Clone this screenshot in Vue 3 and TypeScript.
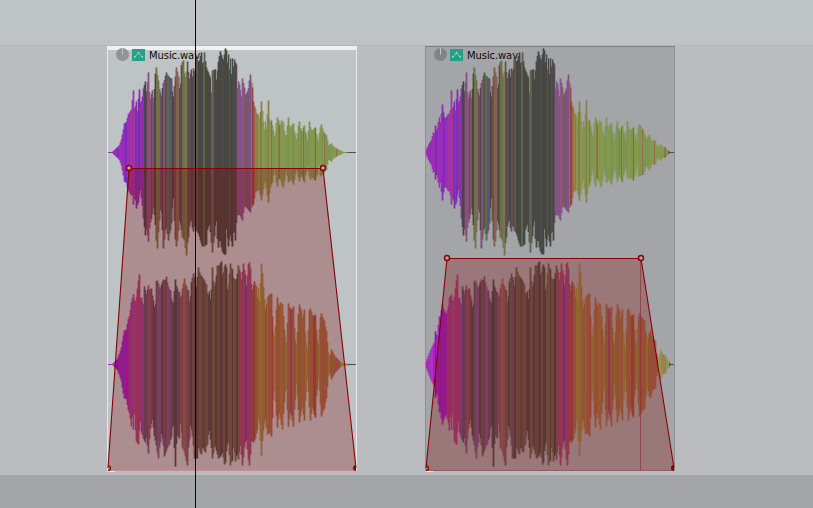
<script setup lang="ts">
interface Column { x: number; up: number; down: number; haloUp: number; haloDown: number; color: string }
interface Wave { center: number; columns: Column[] }
interface Clip { name: string; kind: 'selected' | 'dimmed'; waves: Wave[]; envelope: number }

// Samples are "position:amplitude"; positions are at three units to the pixel, amplitudes in pixels.
function read(text: string, shift: number): [number, number][] {
  return text.trim().split(/\s+/).map((s) => {
    const [x, h] = s.split(':').map(Number)
    return [x / 3 + shift, h] as [number, number]
  })
}

const softStart = '24:.5 38:.5 45:3 52:5 58:7 64:12 70:22 73:29 79:30 85:38 91:41 95:43'
const softStartLow2 = '24:.5 38:.5 45:3 52:5 58:10 64:16 70:28 73:34 79:34 85:45 90:50 94:62'
const hardTop = '24:2 33:8 40:12 46:20 49:18 52:27 55:22 58:24 64:35 68:30 73:48 76:40 79:35 85:35 92:39 97:38'
const hardLow = '24:2 33:10 40:16 46:20 49:20 52:33 58:28 64:48 68:48 73:60 79:53 85:50 92:58 94:66'

const bodies = {
  top1: ['100:62 104:42 109:51 112:40 118:63 122:48 127:55 131:64 136:71 140:60 145:80 150:52 157:62 162:52 165:75 169:85 175:72 180:60 184:56 189:68 193:72 199:80 206:76 213:74 220:54 225:72 230:85 236:75 240:58 244:87 249:92 254:78 258:75 262:91 268:73 274:83 278:75 281:84 285:80 290:94 297:90 304:100 309:85 313:100 319:85 325:80 331:75 334:57 338:82 345:83 350:72 354:88 361:101 368:94 372:92',
    '0:104 4:102 8:88 11:98 14:80 16:94 20:76 22:94 26:85 29:93 33:88 37:63 40:71 44:68 50:55 53:74 58:65 62:57 66:60 70:63 74:72 77:78 81:65 83:48 86:51 90:44 96:38 100:38 105:34 109:51 113:40 118:22 121:31 125:25 130:52 134:31 140:32 145:22 150:14 156:35 160:32 165:26 170:32 175:30 180:18 184:16 190:35 195:24 204:29 210:18 215:13 222:31 228:22 233:22 237:27 243:18 248:12 253:31 258:23 264:22 270:25 276:16 281:12 285:24 289:28'],
  low1: ['98:43 101:52 105:43 109:56 115:50 121:37 127:52 131:66 136:83 140:76 145:89 150:70 155:66 161:55 166:70 171:96 175:80 183:52 187:75 191:96 196:78 200:75 205:88 210:78 215:70 220:42 225:80 228:94 233:88 238:68 243:74 248:85 254:88 259:103 264:85 270:70 274:67 279:79 285:72 290:78 297:82 303:90 308:94 313:94 318:92 323:76 329:72 333:84 337:100 343:84 349:66 354:95 360:86 366:98 372:102',
    '0:102 4:75 10:94 16:82 22:94 27:75 31:88 36:63 42:62 46:63 52:68 58:55 62:54 67:56 72:58 76:60 81:53 86:52 91:40 97:38 103:38 110:48 115:37 121:27 130:50 136:35 142:30 149:16 156:34 162:25 168:28 174:35 179:28 184:17 191:30 198:26 206:32 211:22 215:16 223:29 230:22 238:30 243:20 248:14 255:27 263:25 270:28 277:22 283:12 287:24'],
  top2: ['100:70 105:62 109:66 114:80 118:90 121:66 125:67 130:58 134:78 140:70 145:79 150:74 154:76 160:64 166:53 168:83 173:84 180:76 184:79 190:85 196:84 200:88 204:78 210:74 216:63 221:62 226:85 231:76 237:72 243:66 248:76 253:86 258:78 264:74 270:60 274:82 281:91 285:85 290:78 295:97 301:90 308:87 313:84 319:80 324:68 328:73 333:62 337:97 342:78 347:82 353:99 358:99 364:103 368:88 373:97',
    '0:100 4:97 8:72 12:85 16:101 21:95 26:86 32:85 36:86 40:99 46:92 50:84 55:101 61:90 65:78 70:100 73:102 77:95 81:72 88:83 94:78 97:65 100:76 104:62 109:101 113:90 118:65 122:55 127:66 133:70 139:71 143:45 145:32 150:28 153:48 157:67 162:58 167:62 173:60 180:28 185:22 190:61 195:56 200:55 206:58 210:24 216:20 219:45 223:60 229:54 233:46 238:55 243:22 248:16 253:54 257:56 264:48 272:50 276:25 281:20 285:45 289:51'],
  low2: ['97:50 100:65 104:48 108:76 115:80 121:56 125:68 131:74 136:78 140:73 145:89 151:64 158:55 163:71 169:80 175:94 180:78 184:69 189:76 194:92 199:86 207:80 214:73 220:58 226:102 231:70 238:74 242:58 248:83 254:88 262:101 267:75 272:60 278:72 284:94 292:94 296:82 303:90 309:82 315:88 321:80 328:65 334:82 338:94 345:80 350:86 355:94 362:92 368:88 374:100',
    '0:98 5:85 10:76 16:101 21:96 26:82 32:97 36:88 41:95 46:80 53:101 60:78 65:76 70:94 74:101 80:75 86:78 91:74 97:65 102:50 109:91 115:66 121:54 127:70 133:68 140:72 145:35 149:25 157:63 163:48 172:65 178:38 184:22 190:62 197:47 206:62 210:35 215:18 223:58 232:42 238:56 243:28 248:14 256:56 263:42 270:53 276:25 281:14 289:52'],
}

const softTail1 = '295:21 304:17 311:7 319:9 325:6 335:4 345:2 355:.5 392:.5'
const softTail2 = '297:44 305:33 310:12 315:8 320:15 328:9 336:6 345:3 355:1 392:.5'
const hardTail1 = '302:22 307:16 311:13 319:18 326:12 336:12 344:5 352:8 358:6 366:5 374:2 380:.5 392:.5'
const hardTail2 = '303:44 309:30 314:22 321:34 328:26 336:24 341:10 347:6 352:15 359:10 366:9 374:4 382:.5 392:.5'

// Amplitude per pixel column; a peak that falls inside a column sets its height.
function heights(start: string, body: string[], tail: string): number[] {
  const pts = [...read(start, -8), ...read(body[0], -8), ...read(body[1], 117), ...read(tail, 117)]
  return Array.from({ length: 248 }, (_, x) => {
    const c = x + 0.5
    let i = 0
    while (i < pts.length - 2 && pts[i + 1][0] < c) i++
    const [x0, h0] = pts[i]
    const [x1, h1] = pts[i + 1]
    const t = x1 > x0 ? Math.min(1, Math.max(0, (c - x0) / (x1 - x0))) : 0
    let h = h0 + (h1 - h0) * t
    for (const [px, ph] of pts) if (px >= x && px < x + 1 && ph > h) h = ph
    return Math.max(0.5, h)
  })
}

// "from:color" pairs, in pixels from the clip's left edge.
function palette(text: string): string[] {
  const list = text.trim().split(/\s+/).map((s) => s.split(':'))
  const out: string[] = []
  list.forEach(([x, color], i) => {
    const end = i + 1 < list.length ? Number(list[i + 1][0]) : 248
    for (let p = Number(x); p < end; p++) out.push('#' + color)
  })
  return out
}

const colors1 = palette(`0:a02cb4 3:8a2cc0 5:a02cb4 9:7a2cbe 11:a02cb4 15:902cc0 17:7a2cbe 19:8f35b8 20:a02cb4 22:a23898 24:a02cb4
  25:a23898 27:7d2fae 29:912fb8 30:7a2cbe 32:9830a0 33:8a30b0 36:4a4350 38:5f4a5c 39:8a5078 43:6a4a5e 44:7b5070 46:474743 48:74704c 51:7a684c
  52:6a4a66 54:474743 55:8a4c78 57:505a48 59:5a6a4c 61:63507a 64:474743 66:6e5048 68:806450 71:5a4a5c 74:6e7048 77:747a4e 79:5f5048
  81:5b4a5a 83:4a4846 85:56564a 87:474743 88:6a5048 90:474743 95:5c6447 97:474743 103:62604a 106:474743 114:4e4e48 115:474743 121:565648 122:474743
  125:4c4c58 127:474743 128:5f4c48 129:87604c 130:805487 134:87568b 136:8b5070 137:77604a 139:70529a 141:7a52a0 142:8a4c78 143:87765a 144:8f4848
  146:a06048 147:8f8048 150:84994c 152:8a7a4c 154:84994c 157:7f9450 160:8a7a4c 161:84994c 163:8a724c 164:7f9450 167:84994c 170:8a7a4c
  171:8a6c4c 172:84994c 178:7f9450 181:84994c 184:7a9454 187:84994c 190:7f9450 193:8a7a4c 194:84994c 195:8a6c4c 196:7f9450 202:84994c 205:7f9450
  207:8a644c 208:84994c 213:7f9450 215:84994c 216:8f704c 217:7f9450 223:84994c 228:8f704c 229:84994c 238:8f704c 240:84994c 242:55554c`)

const colors2 = palette(`0:b028b0 3:8f3fb8 5:c028c8 7:9f21c0 9:781cc0 10:9f21c0 14:8f28b8 15:9f21c0 20:9c2da8 21:aa3d73 23:914299 25:9f4590 29:aa425d
  31:b6424d 32:914299 36:5f5263 38:685263 40:6f5c83 42:a5424d 43:685263 45:4d4d4d 47:5f5263 49:795883 53:4d4d4d 55:795063 57:685263 59:795883
  62:685263 65:4d4d4d 69:685263 72:785868 75:9b634d 77:786363 79:795068 81:68604d 82:4d4d4d 84:68604d 86:685263 88:4d4d4d 90:68604d 94:5f5053
  97:68604d 100:4d4d4d 104:68604d 107:4d4d4d 109:68584d 112:4d4d4d 115:68604d 117:4d4d4d 120:6a654d 124:4d4d4d 125:6a604d 128:4d4842 130:6a605d
  131:87505d 132:974d6e 135:875c4d 136:974d6e 137:813ca4 139:974d6e 144:a04d5c 145:974d4d 147:9c6e47 150:978942 154:978042 157:9c6e47
  159:978942 160:9c6e47 164:ac4b42 165:978942 168:9c6e47 172:a5764b 175:9c6e47 177:978942 179:9c6e47 182:974d6e 184:9c6e47 188:978942 189:9c6e47
  194:a5764b 195:9c6e47 197:978942 200:9c6e47 205:974d6e 206:ac4b42 208:9c6e47 210:978942 212:9c6e47 214:a5644b 216:9c6e47 220:978942 222:9c6e47
  225:a0646a 226:9c6e47 228:a85d65 229:9c6e47 232:969850 235:9c8058 239:a07a58 240:909850 243:55554c`)

function wave(center: number, up: number[], down: number[], colors: string[]): Wave {
  const near = (h: number[], x: number) => Math.max(h[x - 1] ?? 0, h[x], h[x + 1] ?? 0)
  return {
    center,
    columns: up.map((h, x) => ({
      x,
      up: Math.round(h * 2) / 2,
      down: Math.round(down[x] * 2) / 2,
      haloUp: near(up, x),
      haloDown: near(down, x),
      color: colors[x],
    })),
  }
}

function waves(soft: boolean): Wave[] {
  const t1 = soft ? softTail1 : hardTail1
  const t2 = soft ? softTail2 : hardTail2
  return [
    wave(106.5, heights(soft ? softStart : hardTop, bodies.top1, t1), heights(soft ? softStart : hardTop, bodies.low1, t1), colors1),
    wave(318.5, heights(soft ? softStartLow2 : hardLow, bodies.top2, t2), heights(soft ? softStartLow2 : hardLow, bodies.low2, t2), colors2),
  ]
}

const clips: Clip[] = [
  { name: 'Music.wav', kind: 'selected', waves: waves(true), envelope: 122 },
  { name: 'Music.wav', kind: 'dimmed', waves: waves(false), envelope: 212 },
]
</script>

<template>
  <main class="arranger">
    <div class="lane upper"></div>
    <section class="track">
      <article v-for="(clip, i) in clips" :key="i" class="clip" :class="clip.kind">
        <svg class="canvas" width="250" height="426" viewBox="-1 0 250 426">
          <g v-for="(w, k) in clip.waves" :key="k">
            <template v-for="c in w.columns" :key="c.x">
              <rect class="halo" :x="c.x" :y="w.center - c.haloUp" width="1" :height="c.haloUp + c.haloDown" :fill="c.color" />
              <rect :x="c.x" :y="w.center - c.up" width="1" :height="c.up + c.down" :fill="c.color" />
            </template>
            <path class="silence" :d="`M${clip.kind === 'selected' ? 240 : 244} ${w.center}H248`" />
          </g>
          <path class="shade" :d="`M0 424V422L21 ${clip.envelope}H215L248 422V424Z`" />
          <path v-if="clip.kind === 'dimmed'" class="guide" :d="`M214.5 ${clip.envelope}V424`" />
          <path class="base" d="M0 424.5H248" />
          <path class="tab" d="M0 425.5H7" />
          <path class="curve" :d="`M0 422L21 ${clip.envelope}.5H215L248 422`" />
          <circle class="node" cx="21" :cy="clip.envelope" r="2.5" />
          <circle class="node" cx="215" :cy="clip.envelope" r="2.5" />
          <path class="half" d="M0 419.5A2.5 2.5 0 0 1 0 424.5" />
          <path class="end" d="M248 419a3 3 0 0 0 0 6Z" />
        </svg>
        <header class="title">
          <svg width="13" height="13" viewBox="0 0 13 13">
            <circle cx="6.5" cy="6.5" r="6.5" class="dial" />
            <path d="M6.5 0V6.5" class="hand" />
          </svg>
          <svg width="13" height="12" viewBox="0 0 13 12">
            <rect width="13" height="12" fill="#289f86" />
            <path d="M2.5 8L6.5 4L10.5 8" fill="none" stroke="#86d3c3" stroke-width="1" />
            <path d="M2 7h1.5v1.5h-1.5zM5.7 3h1.6v1.6h-1.6zM9.5 7h1.5v1.5h-1.5z" fill="#a5e1d5" />
          </svg>
          <span>{{ clip.name }}</span>
        </header>
      </article>
    </section>
    <div class="lane lower"></div>
    <div class="playhead"></div>
  </main>
</template>

<style>
body { margin: 0; overflow: hidden; }
</style>
<style scoped>
.arranger { position: relative; display: grid; grid-template-rows: 46px 429px 33px; width: 813px; height: 508px; overflow: hidden; }
.upper { background: #bec3c6; border-bottom: 1px solid #b3b7ba; box-sizing: border-box; }
.lower { background: #a3a5a8; }
.track { display: flex; align-items: flex-start; gap: 68px; padding-left: 107px; background: #bbbcc0; }
.clip { position: relative; box-sizing: border-box; width: 250px; height: 425px; flex: none; }
.selected { background: #bec3c6; border: 1px solid #e5e7e8; border-top: 4px solid #f0f0f0; }
.dimmed { background: #a3a5a8; border: 1px solid #8b8d8f; border-top-color: #7d7f81; border-bottom: 0; }
.canvas { position: absolute; left: -1px; top: -1px; display: block; }
.selected .canvas { top: -4px; }
.halo { fill-opacity: .4; }
.silence { stroke: #4c4d4c; stroke-width: 1; }
.title { position: absolute; left: 8px; top: 1px; display: flex; align-items: center; gap: 3px; height: 13px; }
.selected .title { top: -2px; }
.title span { margin-left: 1px; font: 10px/13px "DejaVu Sans", Verdana, sans-serif; letter-spacing: -.1px; color: #0b0b0b; position: relative; top: 1px; }
.dial { fill: #929395; }
.dimmed .dial { fill: #828385; }
.hand { stroke: #c2c4c5; stroke-width: 1; }
.shade { fill: #800000; fill-opacity: .27; }
.guide { stroke: #8d3038; stroke-opacity: .65; }
.base { stroke: #c78d90; stroke-width: 1; }
.dimmed .base { stroke: #8e5d61; }
.tab { stroke: #f0eaea; }
.curve { fill: none; stroke: #870004; stroke-width: 1.1; }
.node { fill: #b5a5a6; stroke: #870004; stroke-width: 1.4; }
.half { fill: none; stroke: #870004; stroke-width: 1.2; }
.end { fill: #870004; }
.playhead { position: absolute; left: 195px; top: 0; width: 1px; height: 508px; background: #080808; }
</style>
